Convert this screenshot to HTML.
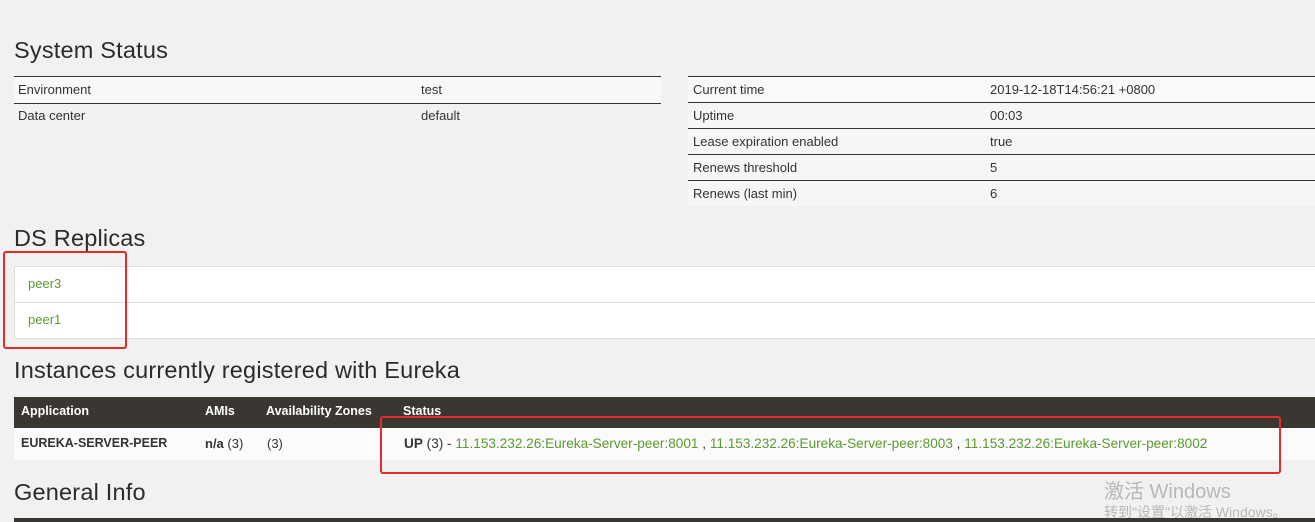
<!DOCTYPE html>
<html><head><meta charset="utf-8"><style>
body{margin:0;width:1315px;height:522px;overflow:hidden;background:#f1f1f1;font-family:"Liberation Sans","Noto Sans CJK SC",sans-serif;color:#222;position:relative}
.a{position:absolute}
h2{position:absolute;margin:0;font-weight:normal;font-size:23.5px;color:#2b2b2b;left:14px;letter-spacing:0.2px}
.t{position:absolute;font-size:13px;color:#333}
.g{color:#5b9a2e}
.red{position:absolute;border:2px solid #e62a2a;border-radius:3px}
</style></head><body>
<h2 style="top:37px">System Status</h2>
<div class="a" style="left:14px;top:76px;width:647px;height:26px;border-top:1px solid #333;border-bottom:1px solid #333;background:#f8f8f8"></div>
<div class="t" style="left:18px;top:82px">Environment</div><div class="t" style="left:421px;top:82px">test</div>
<div class="t" style="left:18px;top:108px">Data center</div><div class="t" style="left:421px;top:108px">default</div>

<div class="a" style="left:688px;top:76px;width:627px;height:130px;background:#f6f6f6">
<div class="a" style="left:0;top:0;width:627px;height:25px;border-top:1px solid #333;border-bottom:1px solid #333;background:#f9f9f9"></div>
<div class="a" style="left:0;top:52px;width:627px;border-top:1px solid #333"></div>
<div class="a" style="left:0;top:78px;width:627px;border-top:1px solid #333"></div>
<div class="a" style="left:0;top:104px;width:627px;border-top:1px solid #333"></div>
</div>
<div class="t" style="left:693px;top:82px">Current time</div><div class="t" style="left:990px;top:82px">2019-12-18T14:56:21 +0800</div>
<div class="t" style="left:693px;top:108px">Uptime</div><div class="t" style="left:990px;top:108px">00:03</div>
<div class="t" style="left:693px;top:134px">Lease expiration enabled</div><div class="t" style="left:990px;top:134px">true</div>
<div class="t" style="left:693px;top:160px">Renews threshold</div><div class="t" style="left:990px;top:160px">5</div>
<div class="t" style="left:693px;top:186px">Renews (last min)</div><div class="t" style="left:990px;top:186px">6</div>

<h2 style="top:225px">DS Replicas</h2>
<div class="a" style="left:14px;top:266px;width:1301px;height:71px;background:#fff;border:1px solid #ddd;border-right:none"></div>
<div class="a" style="left:14px;top:302px;width:1301px;border-top:1px solid #ddd"></div>
<div class="t g" style="left:28px;top:276px">peer3</div>
<div class="t g" style="left:28px;top:312px">peer1</div>
<div class="red" style="left:3px;top:251px;width:120px;height:94px"></div>

<h2 style="top:357px">Instances currently registered with Eureka</h2>
<div class="a" style="left:14px;top:397px;width:1301px;height:31px;background:#3a3631"></div>
<div class="a" style="left:14px;top:428px;width:1301px;height:32px;background:#fbfbfb"></div>
<div class="t" style="left:21px;top:404px;color:#fff;font-weight:bold;font-size:12.5px">Application</div>
<div class="t" style="left:205px;top:404px;color:#fff;font-weight:bold;font-size:12.5px">AMIs</div>
<div class="t" style="left:266px;top:404px;color:#fff;font-weight:bold;font-size:12.5px">Availability Zones</div>
<div class="t" style="left:403px;top:404px;color:#fff;font-weight:bold;font-size:12.5px">Status</div>
<div class="t" style="left:21px;top:436px;font-weight:bold;font-size:12.5px">EUREKA-SERVER-PEER</div>
<div class="t" style="left:205px;top:436px"><b>n/a</b> (3)</div>
<div class="t" style="left:267px;top:436px">(3)</div>
<div class="t" style="left:404px;top:436px;font-size:13.6px"><b>UP</b> (3) - <span class="g">11.153.232.26:Eureka-Server-peer:8001</span> , <span class="g">11.153.232.26:Eureka-Server-peer:8003</span> , <span class="g">11.153.232.26:Eureka-Server-peer:8002</span></div>
<div class="red" style="left:380px;top:416px;width:897px;height:54px"></div>

<h2 style="top:479px">General Info</h2>
<div class="a" style="left:14px;top:518px;width:1301px;height:4px;background:#3a3631"></div>
<div class="a" style="left:1104px;top:475px;font-size:20px;color:#b8b8b8">激活 Windows</div>
<div class="a" style="left:1104px;top:502px;font-size:14px;color:#b8b8b8">转到"设置"以激活 Windows。</div>
</body></html>
